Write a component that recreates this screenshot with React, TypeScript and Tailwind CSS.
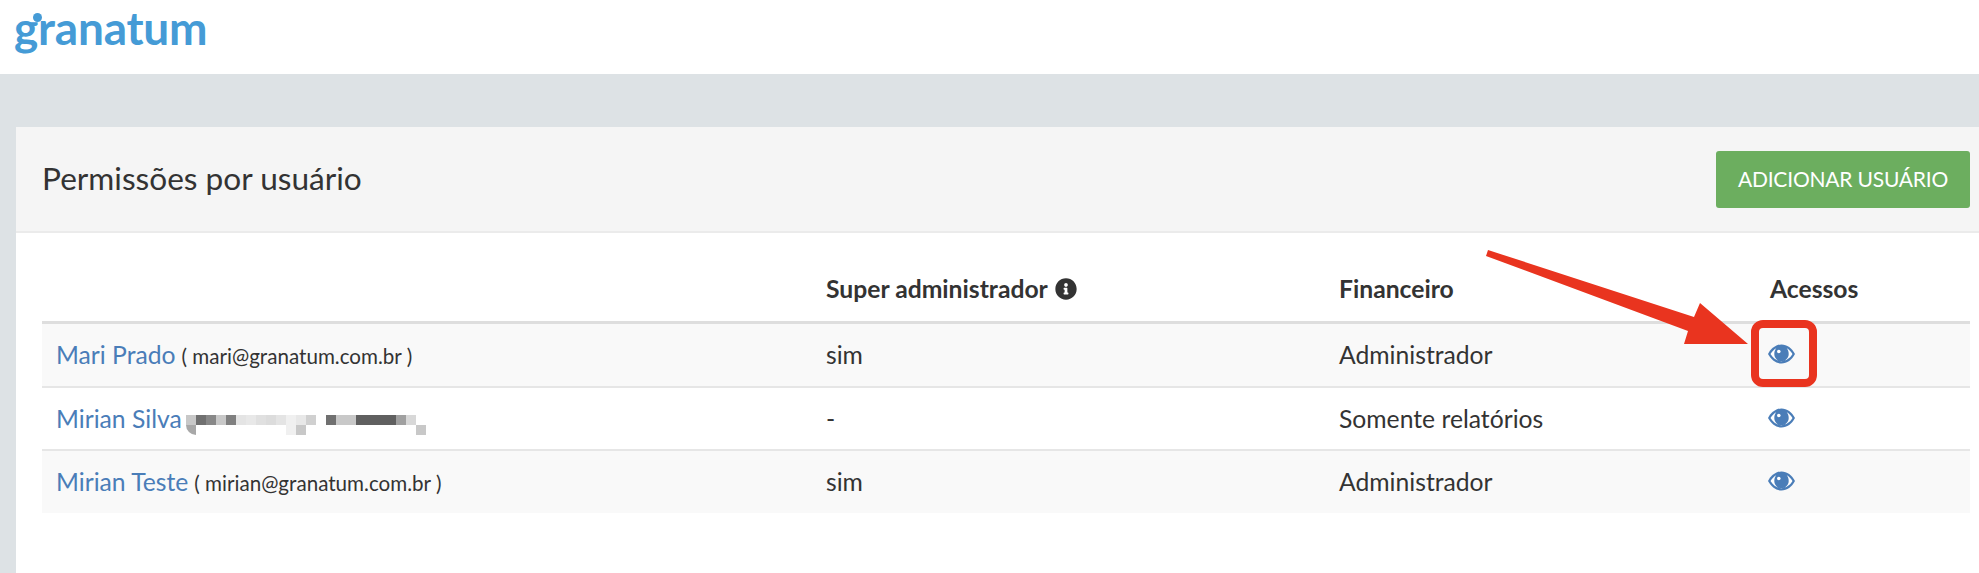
import { FaInfoCircle } from 'react-icons/fa'

interface UserRow {
  name: string
  email?: string
  superAdmin: string
  role: string
}

const users: UserRow[] = [
  { name: 'Mari Prado', email: 'mari@granatum.com.br', superAdmin: 'sim', role: 'Administrador' },
  { name: 'Mirian Silva', superAdmin: '-', role: 'Somente relatórios' },
  { name: 'Mirian Teste', email: 'mirian@granatum.com.br', superAdmin: 'sim', role: 'Administrador' },
]

// blurred e-mail of the second row, one value per 10px cell
const mosaicTop = ['#c8c8c8', '#707070', '#888888', '#c8c8c8', '#808080', '#e4e4e4', '#e8e8e8', '#e0e0e0', '#dcdcdc', '#e4e4e4', '#f0f0f0', '#e8e8e8', '#d0d0d0', '#ffffff', '#707070', '#c8c8c8', '#c8c8c8', '#606060', '#606060', '#606060', '#606060', '#a0a0a0', '#d8d8d8', '#ffffff']
const mosaicBottom = ['#a8a8a8', '#ffffff', '#ffffff', '#ffffff', '#ffffff', '#ffffff', '#ffffff', '#ffffff', '#ffffff', '#ffffff', '#f0f0f0', '#c8c8c8', '#ffffff', '#ffffff', '#ffffff', '#ffffff', '#ffffff', '#ffffff', '#ffffff', '#ffffff', '#ffffff', '#ffffff', '#ffffff', '#c8c8c8']

function Mosaic() {
  return (
    <span className="inline-flex flex-col align-middle ml-[4px] mt-[6px]">
      <span className="flex">
        {mosaicTop.map((c, i) => <span key={i} className="w-[10px] h-[10px]" style={{ background: c }} />)}
      </span>
      <span className="flex">
        {mosaicBottom.map((c, i) => <span key={i} className={`w-[10px] h-[10px] ${i === 0 ? 'rounded-bl-[10px]' : ''}`} style={{ background: c }} />)}
      </span>
    </span>
  )
}

function Eye() {
  return (
    <svg width="27" height="20" viewBox="0 0 27 20" className="block -ml-[2px] -mt-[2px]">
      <path fill="#4a7db8" d="M13.500 .5C19 .5 24 4.300 27 10C24 15.700 19 19.500 13.500 19.500C8 19.500 3 15.700 0 10C3 4.300 8 .5 13.500 .5Z" />
      <path fill="#ffffff" d="M2.500 10C4 7.500 6 5.500 8.200 4.200C7 5.600 6.300 7.700 6.300 10C6.300 14 9.500 17.200 13.500 17.200C17.500 17.200 20.700 14 20.700 10C20.700 7.700 20 5.600 18.800 4.200C21 5.500 23 7.500 24.500 10C22 14.300 18 17 13.500 17C9 17 5 14.300 2.500 10Z" />
      <circle cx="10.800" cy="7.500" r="1.800" fill="#ffffff" />
    </svg>
  )
}

function Logo() {
  return (
    <div className="relative w-[210px] h-[74px] pl-[14px]">
      <span className="block text-[#459bd6] text-[46px] leading-[56px] font-bold tracking-[-0.2px]">granatum</span>
      <span className="absolute left-[33px] top-[13px] w-[9px] h-[9px] rounded-full bg-[#459bd6]" />
    </div>
  )
}

export default function App() {
  return (
    <div className="relative h-[573px] overflow-hidden bg-[#dde2e5] text-[#333333] font-['Lato','Liberation_Sans',sans-serif]">
      <header className="h-[74px] bg-white">
        <Logo />
      </header>

      <main className="pt-[53px] pl-[16px]">
        <section className="bg-white h-[446px] rounded-tl-[3px]">
          <div className="h-[106px] bg-[#f5f5f5] border-b-2 border-[#ebebeb] flex items-center justify-between pl-[26px] pr-[9px]">
            <h1 className="text-[31.6px] font-normal">Permissões por usuário</h1>
            <button className="w-[254px] h-[57px] bg-[#6cae5f] text-white text-[21px] tracking-[-0.2px] rounded-[3px] uppercase">
              Adicionar usuário
            </button>
          </div>

          <div className="pl-[26px] pr-[9px]">
            <table className="w-full table-fixed border-collapse text-[24.7px]">
              <colgroup>
                <col className="w-[770px]" />
                <col className="w-[513px]" />
                <col className="w-[431px]" />
                <col />
              </colgroup>
              <thead>
                <tr className="h-[89px] border-b-[3px] border-[#dedede]">
                  <th />
                  <th className="text-left font-bold align-middle pl-[14px] pt-[24px]">
                    <span className="inline-flex items-center gap-[7px]">
                      Super administrador <FaInfoCircle className="text-[22px]" />
                    </span>
                  </th>
                  <th className="text-left font-bold align-middle pl-[14px] pt-[24px]">Financeiro</th>
                  <th className="text-left font-bold align-middle pl-[14px] pt-[24px]">Acessos</th>
                </tr>
              </thead>
              <tbody>
                {users.map((u, i) => (
                  <tr key={u.name} className={`${i === 0 ? 'h-[65px]' : 'h-[63px]'} ${i % 2 === 0 ? 'bg-[#f9f9f9]' : 'bg-white'} ${i < 2 ? 'border-b-2 border-[#e6e6e6]' : ''}`}>
                    <td className="pl-[14px] whitespace-nowrap">
                      <a className="text-[#4a7db8]">{u.name}</a>
                      {u.email ? <span className="text-[20.6px] ml-[6px]">( {u.email} )</span> : <Mosaic />}
                    </td>
                    <td className="pl-[14px]">{u.superAdmin}</td>
                    <td className="pl-[14px]">{u.role}</td>
                    <td className="pl-[14px]"><Eye /></td>
                  </tr>
                ))}
              </tbody>
            </table>
          </div>
        </section>
      </main>

      {/* annotation drawn over the screenshot */}
      <svg className="absolute inset-0 pointer-events-none" width="1979" height="573" viewBox="0 0 1979 573">
        <polygon fill="#e9341f" points="1488,250 1694,317 1700,303 1748,344 1684,344 1688,331 1486,256" />
        <rect x="1755" y="324" width="58" height="59" rx="8" fill="none" stroke="#e9341f" strokeWidth="8" />
      </svg>
    </div>
  )
}
